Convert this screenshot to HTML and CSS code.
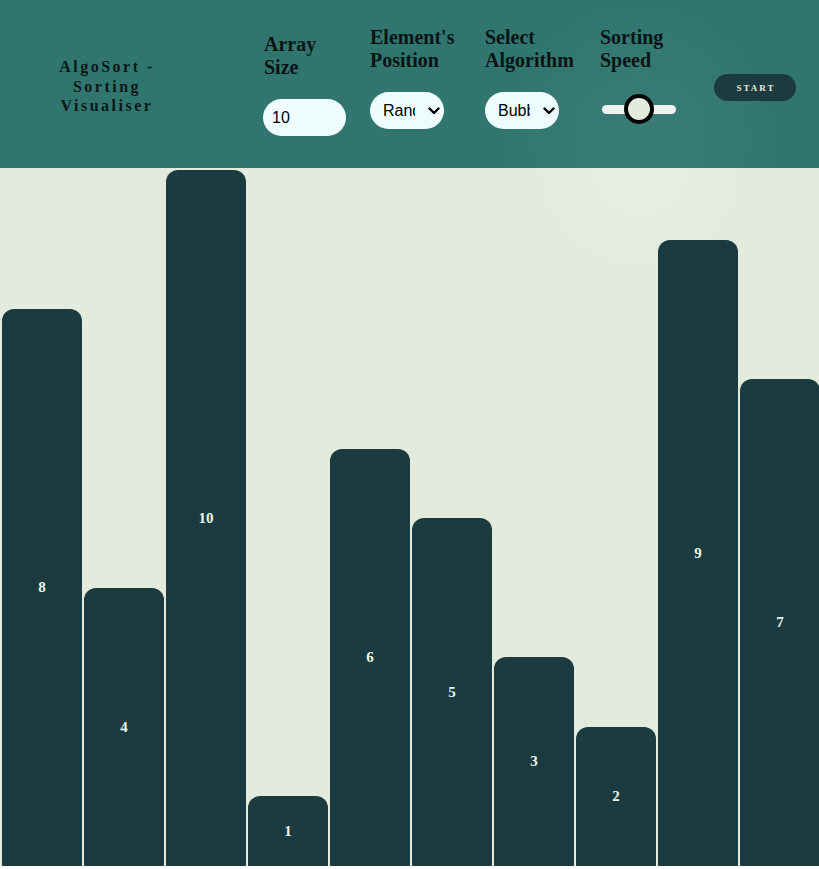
FILE: index.html
```html
<!DOCTYPE html>
<html lang="en">
<head>
<meta charset="utf-8">
<title>AlgoSort - Sorting Visualiser</title>
<link rel="stylesheet" href="styles.css">
</head>
<body>
<header class="topbar">
  <div class="brand"><h1 class="brand-title">AlgoSort - Sorting Visualiser</h1></div>
  <div class="ctl ctl-size">
    <label class="ctl-label" for="size">Array Size</label>
    <input class="size-input" id="size" type="number" value="10">
  </div>
  <div class="ctl ctl-pos">
    <label class="ctl-label" for="pos">Element's Position</label>
    <span class="select-wrap">
      <select class="pill-select" id="pos"><option>Random</option><option>Sorted</option><option>Reversed</option></select>
      <svg class="chev" width="12" height="8" viewBox="0 0 12 8" aria-hidden="true"><path d="M1.5 1.5 L6 6 L10.5 1.5" fill="none" stroke="#000" stroke-width="2.4" stroke-linecap="round" stroke-linejoin="round"/></svg>
    </span>
  </div>
  <div class="ctl ctl-algo">
    <label class="ctl-label" for="algo">Select Algorithm</label>
    <span class="select-wrap">
      <select class="pill-select" id="algo"><option>Bubble Sort</option><option>Selection Sort</option><option>Insertion Sort</option></select>
      <svg class="chev" width="12" height="8" viewBox="0 0 12 8" aria-hidden="true"><path d="M1.5 1.5 L6 6 L10.5 1.5" fill="none" stroke="#000" stroke-width="2.4" stroke-linecap="round" stroke-linejoin="round"/></svg>
    </span>
  </div>
  <div class="ctl ctl-speed">
    <label class="ctl-label" for="speed">Sorting Speed</label>
    <input class="speed" id="speed" type="range" min="0" max="100" value="50">
  </div>
  <div class="ctl ctl-start">
    <button class="start-btn" type="button">START</button>
  </div>
</header>
<main class="bars">
  <div class="bar" style="height:557px"><span class="bar-val">8</span></div>
  <div class="bar" style="height:278px"><span class="bar-val">4</span></div>
  <div class="bar" style="height:696px"><span class="bar-val">10</span></div>
  <div class="bar" style="height:70px"><span class="bar-val">1</span></div>
  <div class="bar" style="height:417px"><span class="bar-val">6</span></div>
  <div class="bar" style="height:348px"><span class="bar-val">5</span></div>
  <div class="bar" style="height:209px"><span class="bar-val">3</span></div>
  <div class="bar" style="height:139px"><span class="bar-val">2</span></div>
  <div class="bar" style="height:626px"><span class="bar-val">9</span></div>
  <div class="bar" style="height:487px"><span class="bar-val">7</span></div>
</main>
</body>
</html>
```
FILE: styles.css
```css
* { box-sizing: border-box; }
html, body { margin: 0; padding: 0; }
body {
  background: #ffffff;
  font-family: "Liberation Serif", "Times New Roman", serif;
  overflow: hidden;
}
.topbar {
  height: 168px;
  display: grid;
  grid-template-columns: 264px 106px 115px 115px 114px 1fr;
  align-items: start;
  background:
    radial-gradient(circle at 640px 140px, rgba(255,255,255,0.045) 0, rgba(255,255,255,0.02) 90px, rgba(255,255,255,0) 140px),
    #30766f;
}
.brand { margin-top: 57px; }
.brand-title {
  margin: 0 0 0 55px;
  width: 104px;
  text-align: center;
  font-size: 16px;
  line-height: 19.5px;
  letter-spacing: 2.5px;
  font-weight: bold;
  color: #0a1818;
}
.ctl { display: flex; flex-direction: column; align-items: flex-start; }
.ctl-size { margin-top: 33px; }
.ctl-pos, .ctl-algo, .ctl-speed { margin-top: 26px; }
.ctl-start { margin-top: 74px; }
.ctl-label {
  font-size: 20px;
  line-height: 23px;
  font-weight: bold;
  color: #0a1414;
}
.ctl-size .ctl-label { width: 80px; }
.ctl-pos .ctl-label { width: 90px; }
.size-input {
  margin-top: 20px;
  margin-left: -1px;
  width: 83px;
  height: 37px;
  border: none;
  border-radius: 19px;
  background: #f0fdff;
  padding: 0 8px 0 9px;
  font-family: "Liberation Sans", Arial, sans-serif;
  font-size: 16px;
  color: #000;
  outline: none;
}
.size-input::-webkit-inner-spin-button,
.size-input::-webkit-outer-spin-button { -webkit-appearance: none; margin: 0; }
.select-wrap {
  position: relative;
  display: block;
  margin-top: 20px;
  width: 74px;
  height: 37px;
}
.pill-select {
  -webkit-appearance: none;
  appearance: none;
  display: block;
  width: 74px;
  height: 37px;
  border: none;
  border-radius: 19px;
  background: #effcfd;
  padding: 0 29px 0 13px;
  font-family: "Liberation Sans", Arial, sans-serif;
  font-size: 16px;
  color: #000;
  outline: none;
}
.chev {
  position: absolute;
  right: 4px;
  top: 15px;
  pointer-events: none;
}
.speed {
  -webkit-appearance: none;
  appearance: none;
  margin: 22px 0 0 2px;
  width: 74px;
  height: 30px;
  background: transparent;
}
.speed::-webkit-slider-runnable-track {
  height: 9px;
  border-radius: 5px;
  background: #f1f1f1;
}
.speed::-webkit-slider-thumb {
  -webkit-appearance: none;
  appearance: none;
  width: 30px;
  height: 30px;
  margin-top: -10.5px;
  border-radius: 50%;
  border: 4px solid #000;
  background: #e3ecdc;
}
.start-btn {
  width: 82px;
  height: 27px;
  border: none;
  border-radius: 14px;
  background: #1c3b40;
  color: #e3ecdc;
  font-family: "Liberation Serif", "Times New Roman", serif;
  font-weight: bold;
  font-size: 9px;
  letter-spacing: 2px;
  padding: 0 0 0 2px;
}
.bars {
  height: 698px;
  display: flex;
  align-items: flex-end;
  gap: 2px;
  padding-left: 2px;
  overflow: hidden;
  background:
    radial-gradient(circle at 640px 0px, rgba(255,255,255,0.14) 0, rgba(255,255,255,0.05) 70px, rgba(255,255,255,0) 110px),
    #e3ecdc;
}
.bar {
  flex: 0 0 80px;
  width: 80px;
  background: #1c3b40;
  border-radius: 12px 12px 0 0;
  display: flex;
  align-items: center;
  justify-content: center;
}
.bar-val {
  font-weight: bold;
  font-size: 15px;
  color: #e8f6ef;
}
```
